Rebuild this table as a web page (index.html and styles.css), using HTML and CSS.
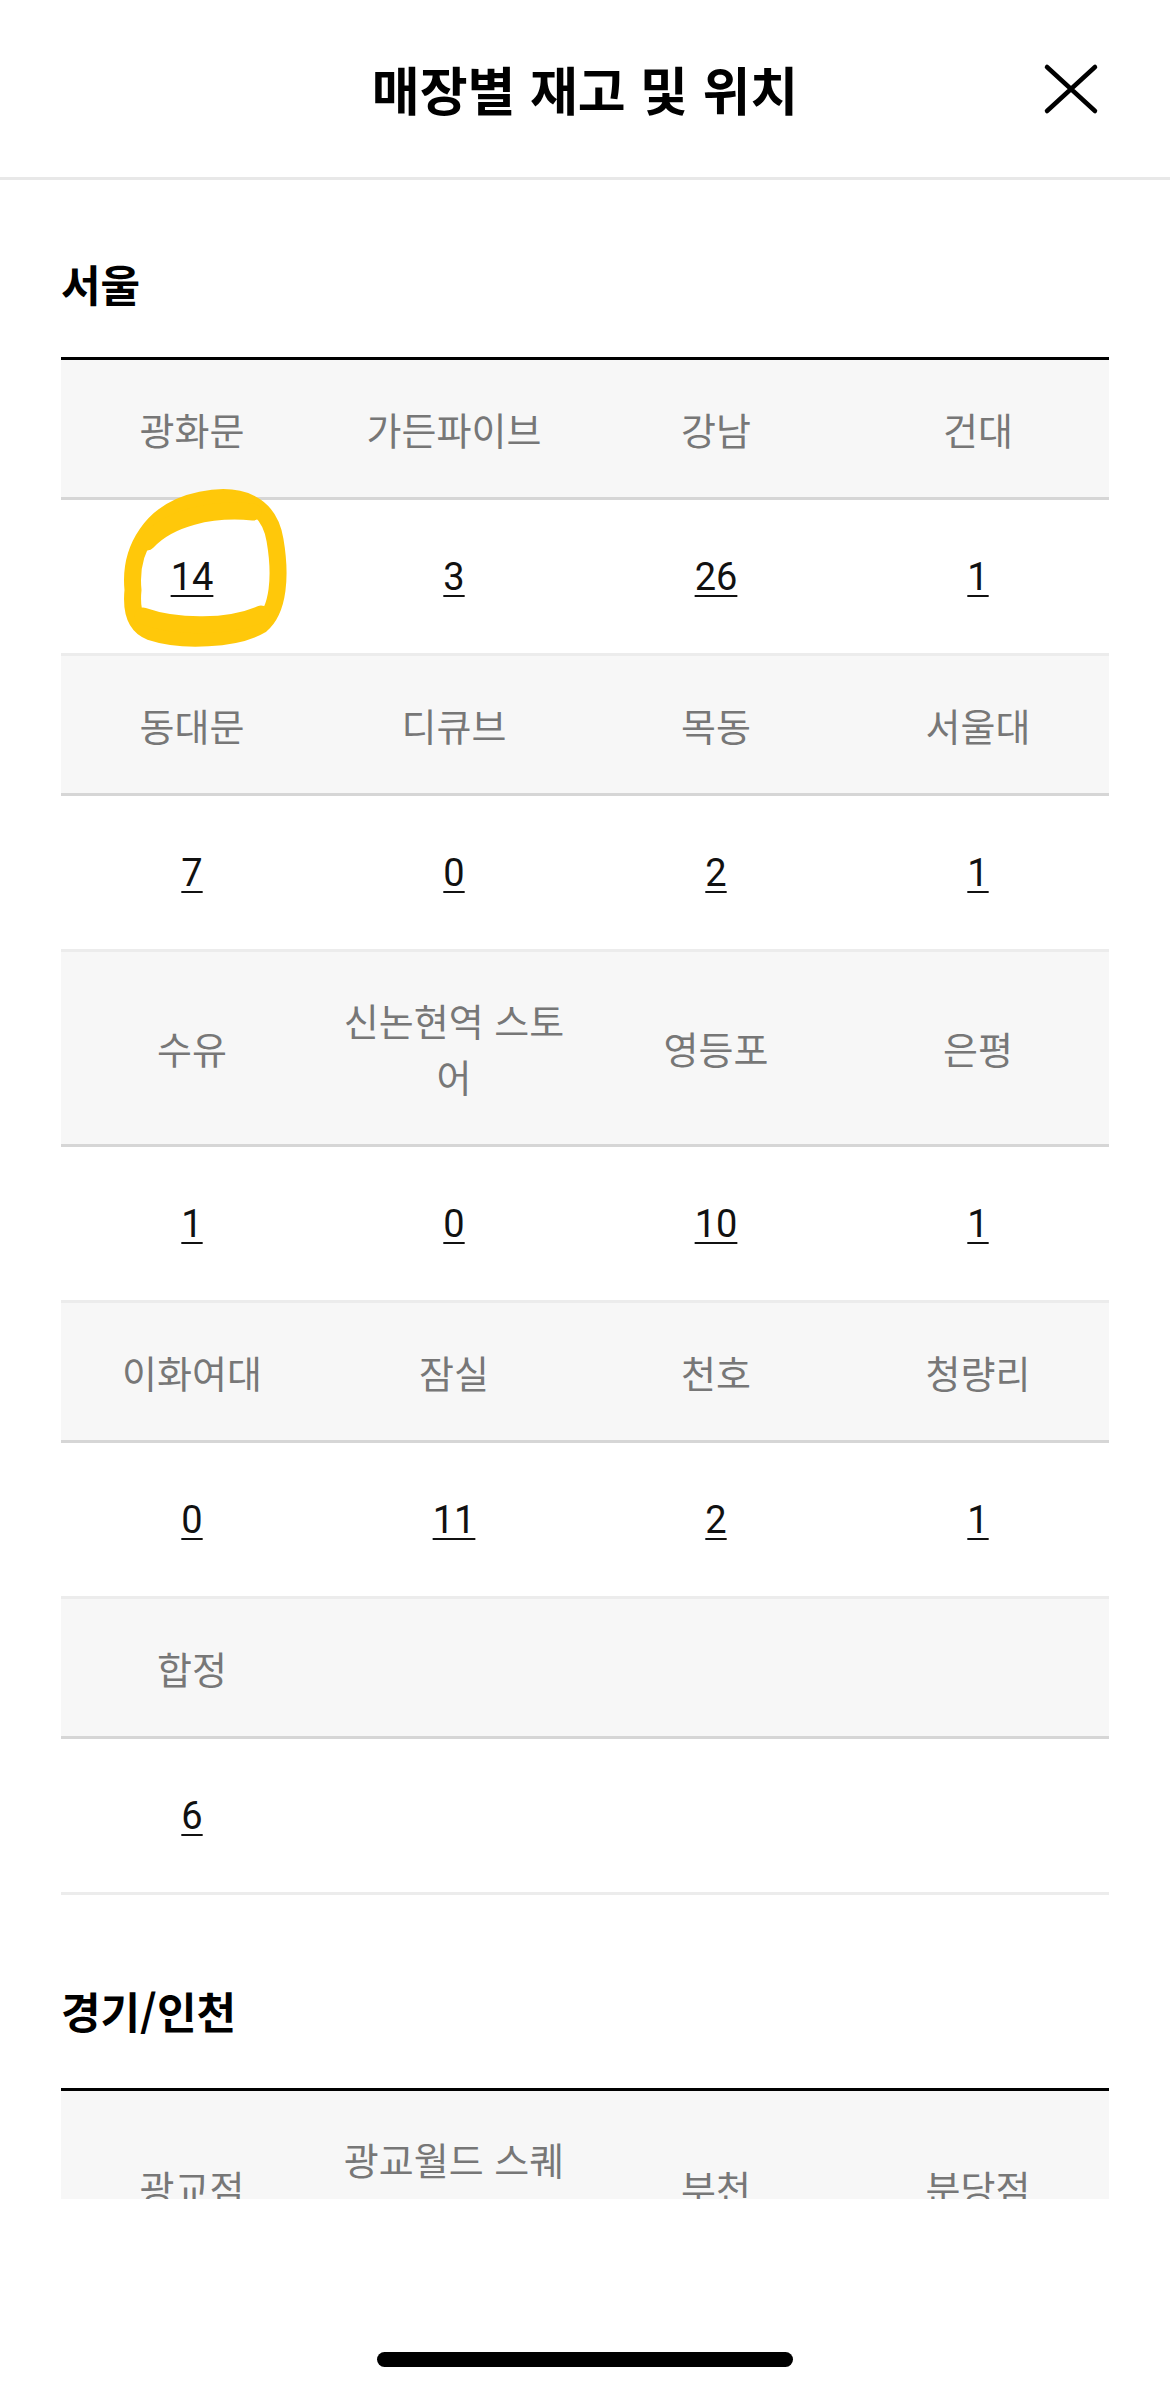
FILE: index.html
```html
<!DOCTYPE html>
<html lang="ko">
<head>
    <meta charset="utf-8">
    <title>매장별 재고 및 위치</title>
    <link rel="stylesheet" href="styles.css">
</head>
<body>
    <header class="sheet-head">
        <h1 class="sheet-head__title">매장별 재고 및 위치</h1>
        <button class="sheet-head__close" type="button" aria-label="닫기">
            <svg viewBox="0 0 56 52" width="56" height="52">
                <path d="M4 4 L52 48 M52 4 L4 48" stroke="#000" stroke-width="4.5" stroke-linecap="round" fill="none"/>
            </svg>
        </button>
    </header>

    <main class="stock">
        <section class="stock__region">
            <h2 class="stock__title">서울</h2>
            <table class="stock__table">
                <tr>
                    <th>광화문</th><th>가든파이브</th><th>강남</th><th>건대</th>
                </tr>
                <tr>
                    <td class="stock__cell--marked">
                        <a href="#" class="stock__num">14</a>
                        <!-- 손으로 그린 동그라미 -->
                        <svg class="stock__mark" viewBox="0 0 250 180" width="250" height="180">
                            <path d="M22 110 C18 70 40 30 90 20 C130 12 158 24 164 60 C170 95 168 130 150 145 C125 160 70 162 40 152 C24 146 20 130 22 110 Z" />
                            <path d="M36 62 C58 38 100 28 142 32" />
                            <path d="M32 136 C66 148 118 148 150 134" />
                        </svg>
                    </td>
                    <td><a href="#" class="stock__num">3</a></td>
                    <td><a href="#" class="stock__num">26</a></td>
                    <td><a href="#" class="stock__num">1</a></td>
                </tr>
                <tr>
                    <th>동대문</th><th>디큐브</th><th>목동</th><th>서울대</th>
                </tr>
                <tr>
                    <td><a href="#" class="stock__num">7</a></td>
                    <td><a href="#" class="stock__num">0</a></td>
                    <td><a href="#" class="stock__num">2</a></td>
                    <td><a href="#" class="stock__num">1</a></td>
                </tr>
                <tr>
                    <th>수유</th><th>신논현역 스토어</th><th>영등포</th><th>은평</th>
                </tr>
                <tr>
                    <td><a href="#" class="stock__num">1</a></td>
                    <td><a href="#" class="stock__num">0</a></td>
                    <td><a href="#" class="stock__num">10</a></td>
                    <td><a href="#" class="stock__num">1</a></td>
                </tr>
                <tr>
                    <th>이화여대</th><th>잠실</th><th>천호</th><th>청량리</th>
                </tr>
                <tr>
                    <td><a href="#" class="stock__num">0</a></td>
                    <td><a href="#" class="stock__num">11</a></td>
                    <td><a href="#" class="stock__num">2</a></td>
                    <td><a href="#" class="stock__num">1</a></td>
                </tr>
                <tr>
                    <th>합정</th><th></th><th></th><th></th>
                </tr>
                <tr>
                    <td><a href="#" class="stock__num">6</a></td>
                    <td></td><td></td><td></td>
                </tr>
            </table>
        </section>

        <section class="stock__region">
            <h2 class="stock__title">경기/인천</h2>
            <table class="stock__table">
                <tr>
                    <th>광교점</th><th>광교월드 스퀘어</th><th>부천</th><th>분당점</th>
                </tr>
            </table>
        </section>
    </main>

    <footer class="home-bar">
        <span class="home-bar__indicator"></span>
    </footer>
</body>
</html>
```

FILE: styles.css
```css
* {
    margin: 0;
    padding: 0;
    box-sizing: border-box;
}
body {
    width: 1170px;
    height: 2391px;
    display: flex;
    flex-direction: column;
    background: #fff;
    color: #000;
    font-family: "Noto Sans CJK KR", "Noto Sans", sans-serif;
}
.sheet-head {
    flex: none;
    height: 180px;
    border-bottom: 3px solid #e8e8e8;
    display: grid;
    grid-template-columns: 1fr auto 1fr;
    align-items: center;
}
.sheet-head__title {
    grid-column: 2;
    font-size: 52px;
    font-weight: 700;
    line-height: 70px;
}
.sheet-head__close {
    grid-column: 3;
    justify-self: end;
    margin-right: 71px;
    width: 56px;
    height: 52px;
    border: 0;
    background: none;
    display: flex;
}
.stock {
    flex: none;
    height: 2019px;
    overflow: hidden;
    padding: 73px 61px 0;
}
.stock__region + .stock__region {
    margin-top: 85px;
}
.stock__title {
    font-size: 43px;
    font-weight: 700;
    line-height: 60px;
    margin-bottom: 44px;
}
.stock__region + .stock__region .stock__title {
    margin-bottom: 48px;
}
.stock__table {
    width: 100%;
    table-layout: fixed;
    border-collapse: separate;
    border-spacing: 0;
    border-top: 3px solid #000;
}
.stock__table th {
    background: #f7f7f7;
    color: #777;
    font-weight: 400;
    font-size: 38px;
    line-height: 56px;
    height: 140px;
    padding: 40px 8px;
    border-bottom: 3px solid #d6d6d6;
    text-align: center;
}
.stock__table td {
    font-family: Roboto, "Noto Sans", sans-serif;
    font-size: 38px;
    line-height: 56px;
    height: 156px;
    padding: 48px 8px;
    text-align: center;
    border-bottom: 3px solid #ececec;
}
.stock__num {
    color: #111;
    text-decoration: underline;
    text-decoration-thickness: 2px;
    text-underline-offset: 5px;
}
.stock__cell--marked {
    position: relative;
}
/* 노란 형광펜 표시 */
.stock__mark {
    position: absolute;
    left: 50px;
    top: -20px;
    pointer-events: none;
}
.stock__mark path {
    fill: none;
    stroke: #ffc80a;
    stroke-width: 17;
    stroke-linecap: round;
    stroke-linejoin: round;
}
.home-bar {
    flex: 1;
    display: flex;
    justify-content: center;
    align-items: flex-end;
    padding-bottom: 24px;
}
.home-bar__indicator {
    width: 416px;
    height: 15px;
    border-radius: 8px;
    background: #000;
}
```
